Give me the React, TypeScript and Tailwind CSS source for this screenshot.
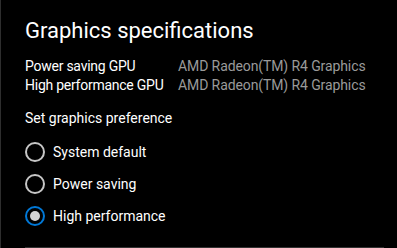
import { useState } from 'react';

const options = ['System default', 'Power saving', 'High performance'];

function Radio({ checked }: { checked: boolean }) {
  return checked ? (
    <span className="flex h-5 w-5 shrink-0 items-center justify-center rounded-full border-2 border-[#0078d7]">
      <span className="h-[10px] w-[10px] rounded-full bg-[#d2d2d2]" />
    </span>
  ) : (
    <span className="h-5 w-5 shrink-0 rounded-full border-2 border-[#c6c6c6]" />
  );
}

export default function App() {
  const [pref, setPref] = useState('High performance');

  return (
    <div className="flex h-[248px] w-[397px] flex-col overflow-hidden border-l border-[#2e2e2e] bg-black pl-6 pt-[17px] font-['Roboto',sans-serif] text-white">
      <h1 className="whitespace-nowrap text-[22px] leading-[28px]">Graphics specifications</h1>

      <div className="mt-[12px] grid grid-cols-[153px_auto] whitespace-nowrap text-[14px] leading-[19px]">
        <span className="tracking-[-0.25px]">Power saving GPU</span>
        <span className="tracking-[-0.1px] text-[#9a9a9a]">AMD Radeon(TM) R4 Graphics</span>
        <span className="tracking-[-0.25px]">High performance GPU</span>
        <span className="tracking-[-0.1px] text-[#9a9a9a]">AMD Radeon(TM) R4 Graphics</span>
      </div>

      <p className="mt-[14px] whitespace-nowrap text-[14px] leading-[19px]">Set graphics preference</p>

      <div className="mt-[14px] flex flex-col gap-3">
        {options.map((o) => (
          <button key={o} type="button" onClick={() => setPref(o)} className="flex h-5 items-center gap-2 whitespace-nowrap text-left text-[14px]">
            <Radio checked={pref === o} />
            <span>{o}</span>
          </button>
        ))}
      </div>

      <div className="mt-[21px] h-px w-[359px] shrink-0 bg-[#333]" />
    </div>
  );
}
